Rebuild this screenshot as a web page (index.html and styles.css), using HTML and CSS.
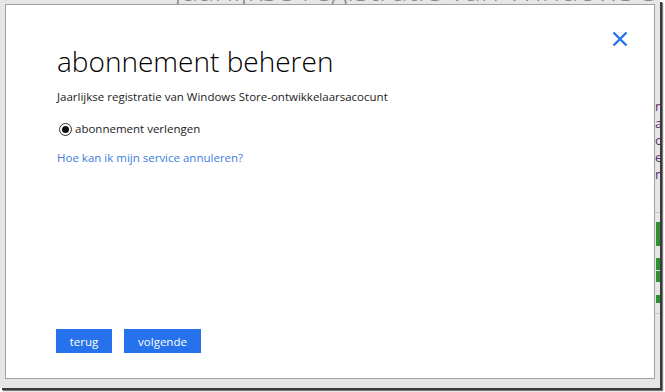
FILE: index.html
```html
<!DOCTYPE html>
<html>
<head>
<meta charset="utf-8">
<link rel="stylesheet" href="styles.css">
</head>
<body>
<div class="shot">
  <div class="backdrop">
    <div class="bg-title">Jaarlijkse registratie van Windows Store-</div>
    <div class="bg-side">
      <div class="bg-letters">
        <span>n</span><span>a</span><span>o</span><span>er</span><span>n</span>
      </div>
      <div class="bg-rule"></div>
      <div class="bg-green g1"></div>
      <div class="bg-green g2"></div>
      <div class="bg-green g3"></div>
      <div class="bg-green g4"></div>
      <div class="bg-rule r2"></div>
    </div>
  </div>
  <div class="dialog">
    <button class="close" aria-label="sluiten">
      <svg width="16" height="16" viewBox="0 0 16 16"><path d="M1.5 1.5 L14.5 14.5 M14.5 1.5 L1.5 14.5" stroke="#2672ec" stroke-width="2.4" fill="none"/></svg>
    </button>
    <h1 class="title">abonnement beheren</h1>
    <p class="subtitle">Jaarlijkse registratie van Windows Store-ontwikkelaarsacocunt</p>
    <label class="radio-row"><span class="radio"><span class="dot"></span></span>abonnement verlengen</label>
    <a class="link" href="#">Hoe kan ik mijn service annuleren?</a>
    <div class="spacer"></div>
    <div class="buttons">
      <button class="btn btn-back">terug</button>
      <button class="btn btn-next">volgende</button>
    </div>
  </div>
</div>
</body>
</html>
```
FILE: styles.css
```css
html, body {
  margin: 0;
  padding: 0;
  background: #ffffff;
  width: 665px;
  height: 392px;
  overflow: hidden;
}
.shot {
  position: relative;
  width: 660px;
  height: 388px;
  background: #e6e6e6;
  box-shadow: 2px 2px 0 #3a3a3a, 3px 3px 1px #777;
  font-family: "Open Sans", "Liberation Sans", sans-serif;
}
.backdrop {
  position: absolute;
  inset: 0;
  overflow: hidden;
}
.bg-title {
  position: absolute;
  left: 174px;
  top: -32px;
  font-family: "Open Sans", sans-serif;
  font-weight: 300;
  font-size: 31px;
  color: #8a8a8a;
  white-space: nowrap;
}
.bg-side {
  position: absolute;
  left: 655px;
  top: 0;
  width: 8px;
  height: 388px;
}
.bg-letters {
  position: absolute;
  top: 98px;
  left: 0;
  display: flex;
  flex-direction: column;
  font-size: 13px;
  line-height: 17px;
  color: #5b2a6a;
}
.bg-rule {
  position: absolute;
  top: 212px;
  left: 0;
  width: 8px;
  height: 1px;
  background: #c8c8c8;
}
.bg-rule.r2 { top: 313px; }
.bg-green {
  position: absolute;
  left: 1px;
  width: 6px;
  background: #2f8f2f;
}
.g1 { top: 222px; height: 24px; }
.g2 { top: 258px; height: 12px; }
.g3 { top: 271px; height: 11px; }
.g4 { top: 295px; height: 8px; }

.dialog {
  position: absolute;
  left: 5px;
  top: 4px;
  background: #ffffff;
  border: 1px solid #a0a0a0;
  display: flex;
  flex-direction: column;
  padding: 0 0 0 51px;
  box-sizing: border-box;
  width: 650px;
  height: 375px;
}
.close {
  position: absolute;
  right: 26px;
  top: 26px;
  border: 0;
  background: transparent;
  padding: 0;
  width: 16px;
  height: 16px;
  display: block;
}
.close svg { display: block; }
.title {
  margin: 39px 0 0 0;
  font-weight: 300;
  font-size: 28px;
  line-height: 34px;
  color: #000;
}
.subtitle {
  margin: 11px 0 0 0;
  font-size: 11.5px;
  line-height: 16px;
  color: #222;
}
.radio-row {
  display: flex;
  align-items: center;
  margin-top: 16px;
  font-size: 11.5px;
  line-height: 16px;
  color: #222;
}
.radio {
  width: 11px;
  height: 11px;
  border: 1px solid #333;
  border-radius: 50%;
  margin: 0 3px 0 2px;
  display: flex;
  align-items: center;
  justify-content: center;
}
.dot {
  width: 7px;
  height: 7px;
  border-radius: 50%;
  background: #111;
}
.link {
  margin-top: 13px;
  font-size: 11.5px;
  line-height: 16px;
  color: #3b7ddd;
  text-decoration: none;
  align-self: flex-start;
}
.spacer { flex: 1; }
.buttons {
  display: flex;
  gap: 12px;
  margin: 0 0 25px -1px;
}
.btn {
  height: 24px;
  border: 0;
  background: #2672ec;
  color: #fff;
  font-family: "Open Sans", "Liberation Sans", sans-serif;
  font-size: 11.5px;
  padding: 0;
  display: flex;
  align-items: center;
  justify-content: center;
}
.btn-back { width: 56px; }
.btn-next { width: 77px; }
```
